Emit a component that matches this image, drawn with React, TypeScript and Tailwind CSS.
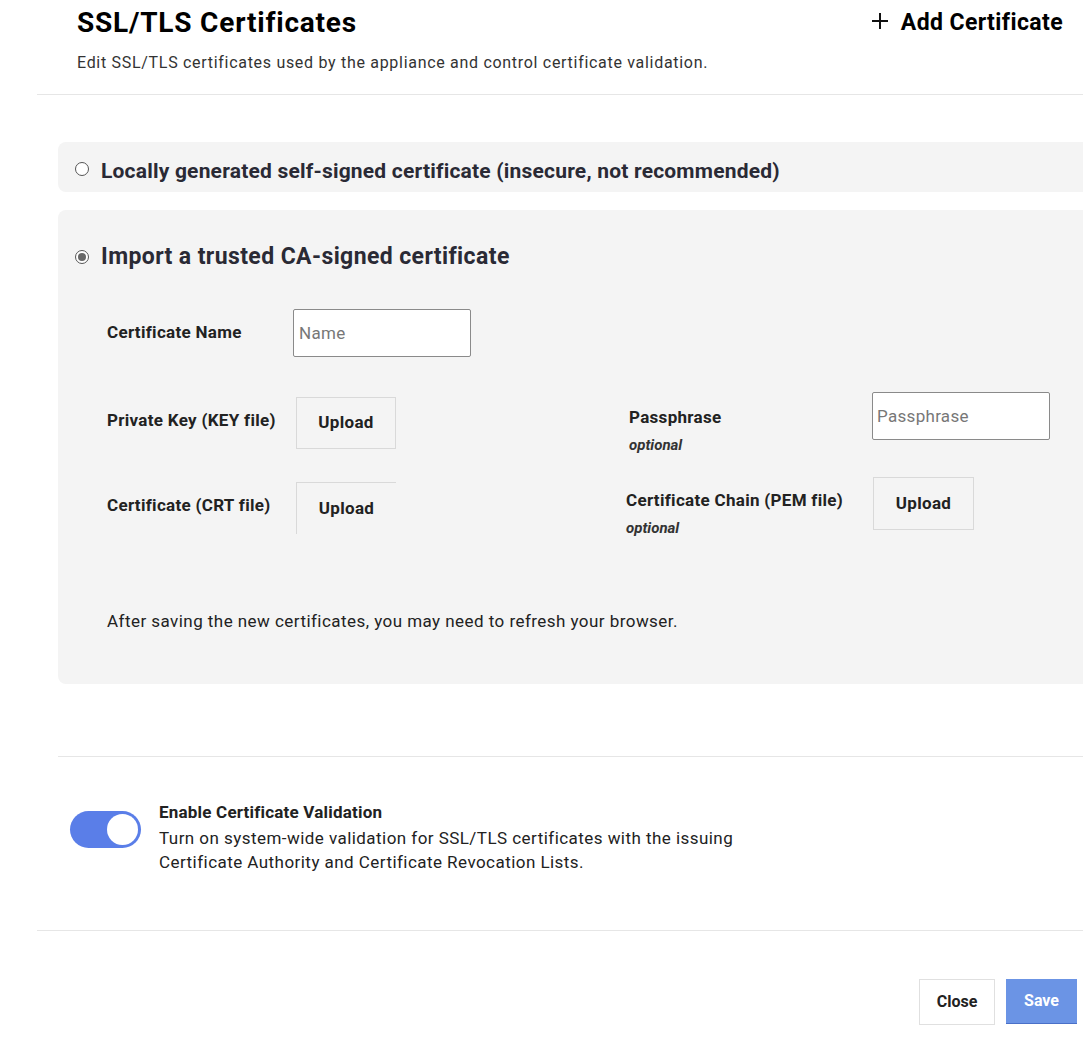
import React from "react";

export default function App() {
  return (
    <div className="w-[1083px] h-[1053px] bg-white overflow-hidden relative text-[#222]" style={{ fontFamily: "Roboto, 'Noto Sans', sans-serif" }}>
      {/* Header */}
      <div className="ml-[37px] border-b border-[#e6e6e6] h-[95px] flex justify-between">
        <div className="pl-[40px]">
          <div className="text-[28px] font-bold text-black leading-[30px] pt-[8px] tracking-[0.8px]">SSL/TLS Certificates</div>
          <div className="text-[16px] text-[#333] mt-[15px] leading-[20px] tracking-[0.7px]">Edit SSL/TLS certificates used by the appliance and control certificate validation.</div>
        </div>
        <div className="flex items-center h-[30px] mt-[8px] pr-[20px] gap-[12px] text-black">
          <svg width="18" height="18" viewBox="0 0 18 18" className="mt-[-4px]"><path d="M9 1v16M1 9h16" stroke="#111" strokeWidth="2" /></svg>
          <span className="text-[23px] font-bold tracking-[0.4px]">Add Certificate</span>
        </div>
      </div>

      {/* Option 1 */}
      <div className="ml-[58px] mt-[47px] h-[50px] bg-[#f4f4f4] rounded-l-[8px] flex items-center pl-[17px] pt-[10px]">
        <span className="w-[14px] h-[14px] rounded-full border border-[#555] bg-white mr-[12px] mt-[-6px]"></span>
        <span className="text-[21px] font-bold text-[#2a2a35] tracking-[0.2px]">Locally generated self-signed certificate (insecure, not recommended)</span>
      </div>

      {/* Option 2 */}
      <div className="ml-[58px] mt-[18px] h-[474px] bg-[#f4f4f4] rounded-l-[8px] flex flex-col">
        <div className="flex items-center pl-[17px] mt-[35px] h-[24px]">
          <span className="w-[14px] h-[14px] rounded-full border border-[#555] bg-white mr-[12px] flex items-center justify-center">
            <span className="w-[8px] h-[8px] rounded-full bg-[#666]"></span>
          </span>
          <span className="text-[23px] font-bold text-[#2a2a35] tracking-[0.4px]">Import a trusted CA-signed certificate</span>
        </div>

        <div className="flex items-center mt-[40px] pl-[49px]">
          <span className="w-[186px] text-[17px] font-bold text-[#222] tracking-[0.3px]">Certificate Name</span>
          <input placeholder="Name" className="w-[178px] h-[48px] bg-white border border-[#8a8a8a] rounded-[2px] px-[5px] text-[17px] tracking-[0.3px] placeholder:text-[#777] outline-none" />
        </div>

        <div className="flex mt-[35px]">
          <div className="w-[520px] pl-[49px]">
            <div className="flex items-center h-[52px] mt-[5px]">
              <span className="w-[189px] text-[17px] font-bold tracking-[0.3px] mt-[-4px]">Private Key (KEY file)</span>
              <button className="w-[100px] h-[52px] border border-[#d9d9d9] text-[17px] font-bold text-[#222] tracking-[0.3px]">Upload</button>
            </div>
            <div className="flex items-center h-[52px] mt-[33px]">
              <span className="w-[189px] text-[17px] font-bold tracking-[0.3px] mt-[-4px]">Certificate (CRT file)</span>
              <button className="w-[100px] h-[52px] border-l border-t border-[#d9d9d9] text-[17px] font-bold text-[#222] tracking-[0.3px]">Upload</button>
            </div>
          </div>
          <div className="flex-1">
            <div className="flex">
              <div className="w-[294px] pl-[51px] pt-[15px]">
                <div className="text-[17px] font-bold leading-[20px] tracking-[0.3px]">Passphrase</div>
                <div className="text-[15px] font-bold italic leading-[18px] mt-[9px] text-[#333]">optional</div>
              </div>
              <input placeholder="Passphrase" className="w-[178px] h-[48px] bg-white border border-[#8a8a8a] rounded-[2px] px-[4px] text-[17px] tracking-[0.3px] placeholder:text-[#777] outline-none" />
            </div>
            <div className="flex mt-[23px]">
              <div className="w-[295px] pl-[48px] pt-[13px]">
                <div className="text-[17px] font-bold leading-[20px] tracking-[0.3px]">Certificate Chain (PEM file)</div>
                <div className="text-[15px] font-bold italic leading-[18px] mt-[9px] text-[#333]">optional</div>
              </div>
              <button className="w-[101px] h-[53px] border border-[#d9d9d9] text-[17px] font-bold text-[#222] tracking-[0.3px]">Upload</button>
            </div>
          </div>
        </div>

        <div className="pl-[49px] mt-[72px] text-[17px] text-[#222] tracking-[0.45px]">After saving the new certificates, you may need to refresh your browser.</div>
      </div>

      {/* Divider */}
      <div className="ml-[58px] mt-[72px] border-t border-[#e6e6e6]"></div>

      {/* Toggle */}
      <div className="flex ml-[70px] mt-[43px]">
        <div className="w-[71px] h-[37px] rounded-full bg-[#5a7ee8] relative mt-[11px] shrink-0">
          <div className="absolute right-[3px] top-[3px] w-[31px] h-[31px] rounded-full bg-white"></div>
        </div>
        <div className="ml-[18px]">
          <div className="text-[17px] font-bold text-[#222] leading-[24px] tracking-[0.2px]">Enable Certificate Validation</div>
          <div className="text-[17px] text-[#222] leading-[24px] mt-[2px] tracking-[0.45px]">Turn on system-wide validation for SSL/TLS certificates with the issuing<br />Certificate Authority and Certificate Revocation Lists.</div>
        </div>
      </div>

      {/* Divider */}
      <div className="ml-[37px] mt-[56px] border-t border-[#e6e6e6]"></div>

      {/* Footer */}
      <div className="flex justify-end mt-[48px] pr-[6px] gap-[11px] items-start">
        <button className="w-[76px] h-[46px] border border-[#e0e0e0] bg-white text-[16px] font-bold text-[#222]">Close</button>
        <button className="w-[71px] h-[45px] bg-[#6b94e5] border-b border-[#4a70c8] text-[16px] font-bold text-white">Save</button>
      </div>
    </div>
  );
}
